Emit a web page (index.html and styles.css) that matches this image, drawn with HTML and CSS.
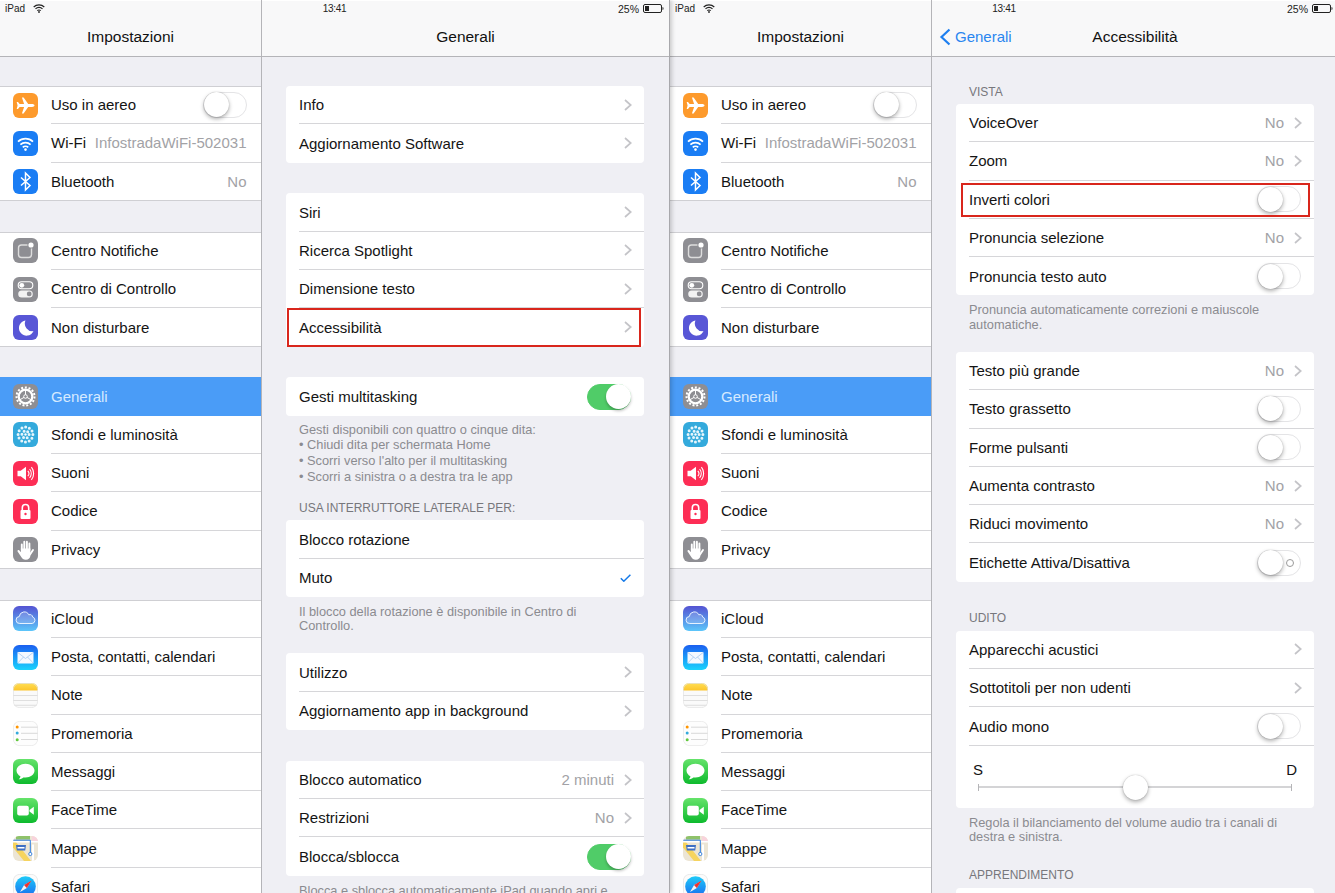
FILE: index.html
```html
<!DOCTYPE html>
<html lang="it">
<head>
    <meta charset="UTF-8">
    <meta name="viewport" content="width=device-width, initial-scale=1.0">
    <title>Impostazioni - Accessibilità</title>
    <link rel="stylesheet" href="styles.css">
</head>
<body>
    <!-- icone condivise -->
    <svg class="sprite" xmlns="http://www.w3.org/2000/svg">
        <defs>
            <linearGradient id="g-cloud" x1="0" y1="0" x2="0" y2="1"><stop offset="0" stop-color="#5453d2"/><stop offset="1" stop-color="#5cc6fa"/></linearGradient>
            <linearGradient id="g-mail" x1="0" y1="0" x2="0" y2="1"><stop offset="0" stop-color="#1b5ff0"/><stop offset="1" stop-color="#1ad3fd"/></linearGradient>
            <linearGradient id="g-green" x1="0" y1="0" x2="0" y2="1"><stop offset="0" stop-color="#66e36b"/><stop offset="1" stop-color="#0dba2d"/></linearGradient>
            <linearGradient id="g-note" x1="0" y1="0" x2="0" y2="1"><stop offset="0" stop-color="#ffdf55"/><stop offset="1" stop-color="#fdc52b"/></linearGradient>
            <linearGradient id="g-safari" x1="0" y1="0" x2="0" y2="1"><stop offset="0" stop-color="#1ecbf8"/><stop offset="1" stop-color="#1a6df0"/></linearGradient>
        </defs>
        <symbol id="i-plane" viewBox="0 0 25 25">
            <rect width="25" height="25" fill="#fd9a2c"/>
            <path fill="#fff" d="M21.5 12.5c0-.8-1.2-1.4-2.4-1.4h-3.9L10.6 4.6H8.9l2.2 6.5H6.6L5 9H3.7l.9 3.5-.9 3.5H5l1.6-2.1h4.5l-2.2 6.5h1.7l4.6-6.5h3.9c1.2 0 2.4-.6 2.4-1.4z"/>
        </symbol>
        <symbol id="i-wifi" viewBox="0 0 25 25">
            <rect width="25" height="25" fill="#1a7df4"/>
            <g fill="none" stroke="#fff" stroke-width="1.7">
                <path d="M5 10.6a11 11 0 0 1 15 0"/>
                <path d="M7.4 13.6a7.4 7.4 0 0 1 10.2 0"/>
                <path d="M9.8 16.4a3.8 3.8 0 0 1 5.4 0"/>
            </g>
            <circle cx="12.5" cy="18.6" r="1.3" fill="#fff"/>
        </symbol>
        <symbol id="i-bt" viewBox="0 0 25 25">
            <rect width="25" height="25" fill="#1a7df4"/>
            <path fill="none" stroke="#fff" stroke-width="1.5" d="M8 8.5l9 8-4.5 4.5V4l4.5 4.5-9 8"/>
        </symbol>
        <symbol id="i-notif" viewBox="0 0 25 25">
            <rect width="25" height="25" fill="#8e8e93"/>
            <rect x="5.5" y="7" width="13" height="12.5" rx="3" fill="none" stroke="#ddd" stroke-width="1.4"/>
            <circle cx="18" cy="7" r="3.6" fill="#8e8e93"/>
            <circle cx="18" cy="7" r="2.6" fill="#fff"/>
        </symbol>
        <symbol id="i-control" viewBox="0 0 25 25">
            <rect width="25" height="25" fill="#8e8e93"/>
            <rect x="5.2" y="4.8" width="14.6" height="7" rx="3.5" fill="none" stroke="#fff" stroke-width="1.1"/>
            <circle cx="8.8" cy="8.3" r="2.4" fill="#fff"/>
            <rect x="5.2" y="13.4" width="14.6" height="7" rx="3.5" fill="#f2f2f2"/>
            <circle cx="16.2" cy="16.9" r="2.4" fill="#8e8e93"/>
        </symbol>
        <symbol id="i-moon" viewBox="0 0 25 25">
            <rect width="25" height="25" fill="#5856d6"/>
            <path fill="#fff" d="M12.5 5.5a7.6 7.6 0 1 0 8 10.6 7.6 7.6 0 0 1-8-10.6z"/>
        </symbol>
        <symbol id="i-gear" viewBox="0 0 25 25">
            <rect width="25" height="25" fill="#8e8e93"/>
            <g fill="none" stroke="#fff">
                <circle cx="12.5" cy="12.5" r="9" stroke-width="2" stroke-dasharray="2 1.77"/>
                <circle cx="12.5" cy="12.5" r="6.8" stroke-width="2.2"/>
                <circle cx="12.5" cy="12.5" r="1.8" stroke-width="1"/>
                <path stroke-width="1" d="M12.5 10.7V6M14 13.4l4.2 2.4M11 13.4l-4.2 2.4"/>
            </g>
        </symbol>
        <symbol id="i-flower" viewBox="0 0 25 25">
            <rect width="25" height="25" fill="#34aadc"/>
            <g fill="none" stroke="#fff" stroke-linecap="round" stroke-width="3" opacity=".88">
                <circle cx="12.5" cy="12.5" r="7.4" stroke-dasharray="0 3.87"/>
                <circle cx="12.5" cy="12.5" r="3.6" stroke-dasharray="0 3.77"/>
            </g>
            <circle cx="12.5" cy="12.5" r="1.2" fill="#fff"/>
        </symbol>
        <symbol id="i-sound" viewBox="0 0 25 25">
            <rect width="25" height="25" fill="#fd2d55"/>
            <path fill="#fff" d="M4.5 9.8h3.2l5.3-4v13.4l-5.300-4H4.5z"/>
            <g fill="none" stroke="#fff" stroke-width="1.1">
                <path d="M14.8 9.8a4 4 0 0 1 0 5.4"/>
                <path d="M16.6 8a7 7 0 0 1 0 9"/>
                <path d="M18.4 6.2a10 10 0 0 1 0 12.6"/>
            </g>
        </symbol>
        <symbol id="i-lock" viewBox="0 0 25 25">
            <rect width="25" height="25" fill="#fd2d55"/>
            <path fill="none" stroke="#fff" stroke-width="1.6" d="M9.3 11.5V8.7a3.2 3.2 0 0 1 6.4 0v2.8"/>
            <rect x="7.5" y="11" width="10" height="9" rx="1" fill="#fff"/>
            <circle cx="12.5" cy="15" r="1.2" fill="#fd2d55"/>
        </symbol>
        <symbol id="i-hand" viewBox="0 0 25 25">
            <rect width="25" height="25" fill="#8e8e93"/>
            <g stroke="#fff" stroke-width="1.9" stroke-linecap="round">
                <path d="M8.8 13V7.5M11.3 12V4.800M13.900 12V4.800M16.400 13V6.500M17 17.500l3-4.500"/>
            </g>
            <path fill="#fff" d="M7.9 11.5h9.5v7c0 2.6-2 4.2-4.600 4.200-2.300 0-3.600-1-4.700-3l-3.500-5.300c-.7-1.100.8-2.100 1.600-1.100l1.700 2z"/>
        </symbol>
        <symbol id="i-cloud" viewBox="0 0 25 25">
            <rect width="25" height="25" fill="url(#g-cloud)"/>
            <path fill="#fff" fill-opacity=".18" stroke="#e6f2ff" stroke-width="1" d="M6.8 17.5a3.5 3.5 0 0 1-.5-7 5 5 0 0 1 9.5-1.7 3.1 3.1 0 0 1 3.9 2.3 3.3 3.3 0 0 1-.6 6.400z"/>
        </symbol>
        <symbol id="i-mail" viewBox="0 0 25 25">
            <rect width="25" height="25" fill="url(#g-mail)"/>
            <rect x="4.5" y="7" width="16" height="11.5" rx=".8" fill="#f4f9ff"/>
            <path fill="none" stroke="#a5c8ef" stroke-width=".8" d="M4.8 7.5l7.700 6 7.700-6M4.800 18l5.700-6M20.200 18l-5.700-6"/>
        </symbol>
        <symbol id="i-note" viewBox="0 0 25 25">
            <rect width="25" height="25" fill="#fafafa"/>
            <rect width="25" height="7.5" fill="url(#g-note)"/>
            <path stroke="#d8d8d8" stroke-width=".8" d="M0 12.5h25M0 17.5h25M0 22.3h25"/>
            <rect x=".4" y=".4" width="24.2" height="24.2" rx="6" fill="none" stroke="#e3e3e3" stroke-width=".8"/>
        </symbol>
        <symbol id="i-list" viewBox="0 0 25 25">
            <rect width="25" height="25" fill="#fdfdfd"/>
            <path stroke="#cfcfcf" stroke-width=".8" d="M8 6.2h17M8 12.3h17M8 18.5h17"/>
            <circle cx="4.2" cy="6" r="1.5" fill="#ff9500"/>
            <circle cx="4.2" cy="12" r="1.5" fill="#34aadc"/>
            <circle cx="4.2" cy="18.8" r="1.5" fill="#64c93f"/>
            <rect x=".4" y=".4" width="24.2" height="24.2" rx="6" fill="none" stroke="#e6e6e6" stroke-width=".8"/>
        </symbol>
        <symbol id="i-msg" viewBox="0 0 25 25">
            <rect width="25" height="25" fill="url(#g-green)"/>
            <path fill="#fff" d="M12.5 4.7c-5 0-9 3-9 6.9 0 2.5 1.600 4.500 4 5.800-.2 1-.9 2-1.900 2.800 1.900 0 3.600-.7 4.700-1.800.7.100 1.400.2 2.200.2 5 0 9-3.100 9-7s-4-6.900-9-6.900z"/>
        </symbol>
        <symbol id="i-face" viewBox="0 0 25 25">
            <rect width="25" height="25" fill="url(#g-green)"/>
            <rect x="4.2" y="7.8" width="11.6" height="9.8" rx="2" fill="#fff"/>
            <path fill="#fff" d="M16.5 12l4.300-3.300v8l-4.300-3.200z"/>
        </symbol>
        <symbol id="i-map" viewBox="0 0 25 25">
            <rect width="25" height="25" fill="#ece5d4"/>
            <path fill="#8fc26a" d="M3 0h14v3.500H3z"/>
            <path fill="#f8d3dc" d="M19 0h6v6h-6z"/>
            <path fill="#f6d45f" d="M0 11.500L11 25h7L3 6H0z"/>
            <path fill="#fff" d="M19 8.500h2V25h-2zM0 5h25v1.500H0z"/>
            <path fill="none" stroke="#2e7de0" stroke-width="1" d="M0 4.200h17.300V17"/>
            <circle cx="17.3" cy="18" r="1.6" fill="#fff" stroke="#2e7de0" stroke-width=".9"/>
            <path fill="#3e6fc4" d="M3 9h10l-.8 5.500H3.800z"/>
            <path fill="#fff" d="M4.500 11h7v1.500h-7z"/>
        </symbol>
        <symbol id="i-safari" viewBox="0 0 25 25">
            <rect width="25" height="25" fill="#fbfbfb"/>
            <rect x=".4" y=".4" width="24.2" height="24.2" rx="6" fill="none" stroke="#e3e3e3" stroke-width=".8"/>
            <circle cx="12.5" cy="12.5" r="10.3" fill="url(#g-safari)"/>
            <path fill="#fff" d="M17.500 7.500l-6.400 3.600 2.800 2.800z"/>
            <path fill="#f4f4f4" d="M7 18l4.100-6.900 2.800 2.800z"/>
            <path fill="#f0342e" d="M18.500 6.500l-4.600 7.400-2.800-2.800z"/>
        </symbol>
        <symbol id="chev" viewBox="0 0 8 12">
            <path fill="none" stroke="#c4c4c8" stroke-width="1.7" d="M1 1l5.700 5L1 11"/>
        </symbol>
    </svg>

    <main class="ipad">
        <!-- schermata 1 -->
        <section class="screen screen-one">
            <div class="status">
                <div class="status-left">iPad
                    <svg class="status-wifi" viewBox="0 0 12 9"><path fill="none" stroke="#222" stroke-width="1.2" d="M.7 3a7.600 7.600 0 0 1 10.600 0M2.500 4.900a5 5 0 0 1 7 0M4.300 6.700a2.400 2.400 0 0 1 3.400 0"/><circle cx="6" cy="8" r=".9" fill="#222"/></svg>
                </div>
                <div class="status-time">13:41</div>
                <div class="status-right">25%
                    <svg class="status-batt" viewBox="0 0 21 9"><rect x=".5" y=".5" width="18" height="8" rx="1.5" fill="none" stroke="#222"/><rect x="2" y="2" width="4" height="5" fill="#222"/><path d="M19.500 3c.8.300 1 .8 1 1.500s-.2 1.200-1 1.500z" fill="#222"/></svg>
                </div>
            </div>

            <aside class="sidebar">
                <div class="nav"><span class="nav-title">Impostazioni</span></div>
                <div class="side-list">
                    <div class="group">
                        <div class="row"><svg class="icon"><use href="#i-plane"/></svg><div class="row-body"><span>Uso in aereo</span><span class="toggle"><span class="knob"></span></span></div></div>
                        <div class="row"><svg class="icon"><use href="#i-wifi"/></svg><div class="row-body"><span>Wi-Fi</span><span class="value">InfostradaWiFi-502031</span></div></div>
                        <div class="row"><svg class="icon"><use href="#i-bt"/></svg><div class="row-body"><span>Bluetooth</span><span class="value">No</span></div></div>
                    </div>
                    <div class="group">
                        <div class="row"><svg class="icon"><use href="#i-notif"/></svg><div class="row-body"><span>Centro Notifiche</span></div></div>
                        <div class="row"><svg class="icon"><use href="#i-control"/></svg><div class="row-body"><span>Centro di Controllo</span></div></div>
                        <div class="row"><svg class="icon"><use href="#i-moon"/></svg><div class="row-body"><span>Non disturbare</span></div></div>
                    </div>
                    <div class="group">
                        <div class="row row-selected"><svg class="icon"><use href="#i-gear"/></svg><div class="row-body"><span>Generali</span></div></div>
                        <div class="row"><svg class="icon"><use href="#i-flower"/></svg><div class="row-body"><span>Sfondi e luminosità</span></div></div>
                        <div class="row"><svg class="icon"><use href="#i-sound"/></svg><div class="row-body"><span>Suoni</span></div></div>
                        <div class="row"><svg class="icon"><use href="#i-lock"/></svg><div class="row-body"><span>Codice</span></div></div>
                        <div class="row"><svg class="icon"><use href="#i-hand"/></svg><div class="row-body"><span>Privacy</span></div></div>
                    </div>
                    <div class="group">
                        <div class="row"><svg class="icon"><use href="#i-cloud"/></svg><div class="row-body"><span>iCloud</span></div></div>
                        <div class="row"><svg class="icon"><use href="#i-mail"/></svg><div class="row-body"><span>Posta, contatti, calendari</span></div></div>
                        <div class="row"><svg class="icon"><use href="#i-note"/></svg><div class="row-body"><span>Note</span></div></div>
                        <div class="row"><svg class="icon"><use href="#i-list"/></svg><div class="row-body"><span>Promemoria</span></div></div>
                        <div class="row"><svg class="icon"><use href="#i-msg"/></svg><div class="row-body"><span>Messaggi</span></div></div>
                        <div class="row"><svg class="icon"><use href="#i-face"/></svg><div class="row-body"><span>FaceTime</span></div></div>
                        <div class="row"><svg class="icon"><use href="#i-map"/></svg><div class="row-body"><span>Mappe</span></div></div>
                        <div class="row"><svg class="icon"><use href="#i-safari"/></svg><div class="row-body"><span>Safari</span></div></div>
                    </div>
                </div>
            </aside>

            <div class="detail">
                <div class="nav"><span class="nav-title">Generali</span></div>
                <div class="detail-list detail-general">
                    <div class="card">
                        <div class="row"><div class="row-body"><span>Info</span><svg class="chev"><use href="#chev"/></svg></div></div>
                        <div class="row"><div class="row-body"><span>Aggiornamento Software</span><svg class="chev"><use href="#chev"/></svg></div></div>
                    </div>
                    <div class="card">
                        <div class="row"><div class="row-body"><span>Siri</span><svg class="chev"><use href="#chev"/></svg></div></div>
                        <div class="row"><div class="row-body"><span>Ricerca Spotlight</span><svg class="chev"><use href="#chev"/></svg></div></div>
                        <div class="row"><div class="row-body"><span>Dimensione testo</span><svg class="chev"><use href="#chev"/></svg></div></div>
                        <div class="row mark-general"><div class="row-body"><span>Accessibilità</span><svg class="chev"><use href="#chev"/></svg></div></div>
                    </div>
                    <div class="card">
                        <div class="row"><div class="row-body"><span>Gesti multitasking</span><span class="toggle toggle-on"><span class="knob"></span></span></div></div>
                    </div>
                    <p class="footnote footnote-loose">Gesti disponibili con quattro o cinque dita:<br>• Chiudi dita per schermata Home<br>• Scorri verso l'alto per il multitasking<br>• Scorri a sinistra o a destra tra le app</p>
                    <h3 class="section-head">USA INTERRUTTORE LATERALE PER:</h3>
                    <div class="card">
                        <div class="row"><div class="row-body"><span>Blocco rotazione</span></div></div>
                        <div class="row"><div class="row-body"><span>Muto</span><svg class="check" viewBox="0 0 11 8"><path fill="none" stroke="#1479e8" stroke-width="1.5" d="M.8 4.200l3 3L10.400.8"/></svg></div></div>
                    </div>
                    <p class="footnote">Il blocco della rotazione è disponibile in Centro di<br>Controllo.</p>
                    <div class="card">
                        <div class="row"><div class="row-body"><span>Utilizzo</span><svg class="chev"><use href="#chev"/></svg></div></div>
                        <div class="row"><div class="row-body"><span>Aggiornamento app in background</span><svg class="chev"><use href="#chev"/></svg></div></div>
                    </div>
                    <div class="card">
                        <div class="row"><div class="row-body"><span>Blocco automatico</span><span class="right"><span class="value">2 minuti</span><svg class="chev"><use href="#chev"/></svg></span></div></div>
                        <div class="row"><div class="row-body"><span>Restrizioni</span><span class="right"><span class="value">No</span><svg class="chev"><use href="#chev"/></svg></span></div></div>
                        <div class="row"><div class="row-body"><span>Blocca/sblocca</span><span class="toggle toggle-on"><span class="knob"></span></span></div></div>
                    </div>
                    <p class="footnote">Blocca e sblocca automaticamente iPad quando apri e</p>
                </div>
            </div>
        </section>

        <!-- schermata 2 -->
        <section class="screen screen-two">
            <div class="status">
                <div class="status-left">iPad
                    <svg class="status-wifi" viewBox="0 0 12 9"><path fill="none" stroke="#222" stroke-width="1.2" d="M.7 3a7.600 7.600 0 0 1 10.600 0M2.500 4.900a5 5 0 0 1 7 0M4.300 6.700a2.400 2.400 0 0 1 3.400 0"/><circle cx="6" cy="8" r=".9" fill="#222"/></svg>
                </div>
                <div class="status-time">13:41</div>
                <div class="status-right">25%
                    <svg class="status-batt" viewBox="0 0 21 9"><rect x=".5" y=".5" width="18" height="8" rx="1.5" fill="none" stroke="#222"/><rect x="2" y="2" width="4" height="5" fill="#222"/><path d="M19.500 3c.8.300 1 .8 1 1.500s-.2 1.200-1 1.500z" fill="#222"/></svg>
                </div>
            </div>

            <aside class="sidebar">
                <div class="nav"><span class="nav-title">Impostazioni</span></div>
                <div class="side-list">
                    <div class="group">
                        <div class="row"><svg class="icon"><use href="#i-plane"/></svg><div class="row-body"><span>Uso in aereo</span><span class="toggle"><span class="knob"></span></span></div></div>
                        <div class="row"><svg class="icon"><use href="#i-wifi"/></svg><div class="row-body"><span>Wi-Fi</span><span class="value">InfostradaWiFi-502031</span></div></div>
                        <div class="row"><svg class="icon"><use href="#i-bt"/></svg><div class="row-body"><span>Bluetooth</span><span class="value">No</span></div></div>
                    </div>
                    <div class="group">
                        <div class="row"><svg class="icon"><use href="#i-notif"/></svg><div class="row-body"><span>Centro Notifiche</span></div></div>
                        <div class="row"><svg class="icon"><use href="#i-control"/></svg><div class="row-body"><span>Centro di Controllo</span></div></div>
                        <div class="row"><svg class="icon"><use href="#i-moon"/></svg><div class="row-body"><span>Non disturbare</span></div></div>
                    </div>
                    <div class="group">
                        <div class="row row-selected"><svg class="icon"><use href="#i-gear"/></svg><div class="row-body"><span>Generali</span></div></div>
                        <div class="row"><svg class="icon"><use href="#i-flower"/></svg><div class="row-body"><span>Sfondi e luminosità</span></div></div>
                        <div class="row"><svg class="icon"><use href="#i-sound"/></svg><div class="row-body"><span>Suoni</span></div></div>
                        <div class="row"><svg class="icon"><use href="#i-lock"/></svg><div class="row-body"><span>Codice</span></div></div>
                        <div class="row"><svg class="icon"><use href="#i-hand"/></svg><div class="row-body"><span>Privacy</span></div></div>
                    </div>
                    <div class="group">
                        <div class="row"><svg class="icon"><use href="#i-cloud"/></svg><div class="row-body"><span>iCloud</span></div></div>
                        <div class="row"><svg class="icon"><use href="#i-mail"/></svg><div class="row-body"><span>Posta, contatti, calendari</span></div></div>
                        <div class="row"><svg class="icon"><use href="#i-note"/></svg><div class="row-body"><span>Note</span></div></div>
                        <div class="row"><svg class="icon"><use href="#i-list"/></svg><div class="row-body"><span>Promemoria</span></div></div>
                        <div class="row"><svg class="icon"><use href="#i-msg"/></svg><div class="row-body"><span>Messaggi</span></div></div>
                        <div class="row"><svg class="icon"><use href="#i-face"/></svg><div class="row-body"><span>FaceTime</span></div></div>
                        <div class="row"><svg class="icon"><use href="#i-map"/></svg><div class="row-body"><span>Mappe</span></div></div>
                        <div class="row"><svg class="icon"><use href="#i-safari"/></svg><div class="row-body"><span>Safari</span></div></div>
                    </div>
                </div>
            </aside>

            <div class="detail">
                <div class="nav nav-back">
                    <a class="back" href="#"><svg class="back-chev" viewBox="0 0 12 18"><path fill="none" stroke="#1e7ff0" stroke-width="2.2" d="M10.500 1.500L2.500 9l8 7.500"/></svg>Generali</a>
                    <span class="nav-title">Accessibilità</span>
                </div>
                <div class="detail-list detail-access">
                    <h3 class="section-head section-first">VISTA</h3>
                    <div class="card">
                        <div class="row"><div class="row-body"><span>VoiceOver</span><span class="right"><span class="value">No</span><svg class="chev"><use href="#chev"/></svg></span></div></div>
                        <div class="row"><div class="row-body"><span>Zoom</span><span class="right"><span class="value">No</span><svg class="chev"><use href="#chev"/></svg></span></div></div>
                        <div class="row mark-access"><div class="row-body"><span>Inverti colori</span><span class="toggle"><span class="knob"></span></span></div></div>
                        <div class="row"><div class="row-body"><span>Pronuncia selezione</span><span class="right"><span class="value">No</span><svg class="chev"><use href="#chev"/></svg></span></div></div>
                        <div class="row"><div class="row-body"><span>Pronuncia testo auto</span><span class="toggle"><span class="knob"></span></span></div></div>
                    </div>
                    <p class="footnote">Pronuncia automaticamente correzioni e maiuscole<br>automatiche.</p>
                    <div class="card">
                        <div class="row"><div class="row-body"><span>Testo più grande</span><span class="right"><span class="value">No</span><svg class="chev"><use href="#chev"/></svg></span></div></div>
                        <div class="row"><div class="row-body"><span>Testo grassetto</span><span class="toggle"><span class="knob"></span></span></div></div>
                        <div class="row"><div class="row-body"><span>Forme pulsanti</span><span class="toggle"><span class="knob"></span></span></div></div>
                        <div class="row"><div class="row-body"><span>Aumenta contrasto</span><span class="right"><span class="value">No</span><svg class="chev"><use href="#chev"/></svg></span></div></div>
                        <div class="row"><div class="row-body"><span>Riduci movimento</span><span class="right"><span class="value">No</span><svg class="chev"><use href="#chev"/></svg></span></div></div>
                        <div class="row"><div class="row-body"><span>Etichette Attiva/Disattiva</span><span class="toggle toggle-labeled"><span class="knob"></span><span class="toggle-o"></span></span></div></div>
                    </div>
                    <h3 class="section-head">UDITO</h3>
                    <div class="card">
                        <div class="row"><div class="row-body"><span>Apparecchi acustici</span><svg class="chev"><use href="#chev"/></svg></div></div>
                        <div class="row"><div class="row-body"><span>Sottotitoli per non udenti</span><svg class="chev"><use href="#chev"/></svg></div></div>
                        <div class="row"><div class="row-body"><span>Audio mono</span><span class="toggle"><span class="knob"></span></span></div></div>
                        <div class="slider-row">
                            <div class="slider-labels"><span>S</span><span>D</span></div>
                            <div class="slider"><span class="tick"></span><span class="knob"></span><span class="tick"></span></div>
                        </div>
                    </div>
                    <p class="footnote">Regola il bilanciamento del volume audio tra i canali di<br>destra e sinistra.</p>
                    <h3 class="section-head">APPRENDIMENTO</h3>
                    <div class="card card-cut"></div>
                </div>
            </div>
        </section>
    </main>
</body>
</html>
```

FILE: styles.css
```css
* {
    margin: 0;
    padding: 0;
    box-sizing: border-box;
}

html, body {
    height: 100%;
    overflow: hidden;
}

body {
    font-family: "Liberation Sans", Arial, sans-serif;
    font-size: 15px;
    color: #141414;
    background: #efeff4;
}

.sprite {
    display: block;
    width: 0;
    height: 0;
}

.ipad {
    display: flex;
    height: 893px;
}

.screen {
    position: relative;
    display: flex;
    height: 893px;
    overflow: hidden;
}

.screen-one {
    width: 670px;
    z-index: 1;
    box-shadow: 2px 0 4px rgba(0, 0, 0, 0.18);
    overflow: visible;
}

.screen-two {
    width: 665px;
}

/* barra di stato */
.status {
    position: absolute;
    top: 0;
    left: 0;
    right: 0;
    height: 16px;
    display: grid;
    grid-template-columns: 1fr auto 1fr;
    align-items: center;
    padding: 1px 6px 0 5px;
    font-size: 10.5px;
    color: #222;
    z-index: 2;
}

.screen-two .status {
    padding-right: 2px;
}

.status-left {
    display: flex;
    align-items: center;
    gap: 8px;
    font-size: 10px;
}

.status-time {
    font-size: 10px;
    letter-spacing: -0.3px;
}

.status-wifi {
    width: 12px;
    height: 9px;
}

.status-right {
    display: flex;
    align-items: center;
    justify-content: flex-end;
    gap: 4px;
}

.status-batt {
    width: 21px;
    height: 9px;
}

/* colonne */
.sidebar {
    width: 262px;
    flex: none;
    border-right: 1px solid #b4b4b8;
}

.detail {
    flex: 1;
    min-width: 0;
}

.screen-one .detail {
    border-right: 1px solid #a8a8ac;
}

.nav {
    height: 57px;
    padding-top: 16px;
    background: #f8f8f9;
    border-top: 1px solid #fff;
    border-bottom: 1px solid #b4b4b8;
    display: flex;
    align-items: center;
    justify-content: center;
}

.nav-title {
    font-size: 15.5px;
    color: #111;
}

.nav-back {
    display: grid;
    grid-template-columns: 1fr auto 1fr;
    padding-left: 7px;
    padding-right: 4px;
}

.nav-back::after {
    content: '';
}

.back {
    display: flex;
    align-items: center;
    gap: 4px;
    color: #2a86f0;
    font-size: 15px;
    text-decoration: none;
}

.back-chev {
    width: 12px;
    height: 18px;
}

.side-list {
    padding-top: 29px;
}

.group {
    background: #fff;
    box-shadow: inset 0 1px #cfcfd3, inset 0 -1px #cfcfd3;
}

.group + .group {
    margin-top: 30.8px;
}

.row {
    height: 38.3px;
    display: flex;
    align-items: center;
    padding-left: 13px;
    position: relative;
}

.group .row {
    padding-left: 12.5px;
    gap: 13.5px;
}

.row-body {
    flex: 1;
    min-width: 0;
    height: 100%;
    display: flex;
    align-items: center;
    justify-content: space-between;
    padding-right: 12px;
    border-bottom: 1px solid #d6d6d9;
    white-space: nowrap;
}

.row:last-child .row-body {
    border-bottom: none;
}

.group .row-body {
    padding-right: 14.5px;
}

.icon {
    width: 25px;
    height: 25px;
    flex: none;
    border-radius: 6px;
    overflow: hidden;
}

.row-selected {
    background: #4a9cf7;
    color: #d6eaff;
}

.row-selected .row-body {
    border-bottom: none;
}

.value {
    color: #a2a2a6;
}

.right {
    display: flex;
    align-items: center;
    gap: 10px;
}

.chev {
    width: 8px;
    height: 12px;
    flex: none;
}

.check {
    width: 11px;
    height: 8px;
    margin-right: 1px;
}

/* interruttori */
.toggle {
    width: 44px;
    height: 26px;
    flex: none;
    display: flex;
    align-items: center;
    border-radius: 13px;
    border: 1px solid #e4e4e6;
    background: #fff;
}

.detail .toggle {
    margin-right: 1px;
}

.toggle-on {
    justify-content: flex-end;
    background: #50cc68;
    border-color: #50cc68;
}

.toggle-labeled {
    justify-content: space-between;
    padding-right: 6px;
}

.toggle-o {
    width: 8px;
    height: 8px;
    border: 1px solid #9a9a9a;
    border-radius: 50%;
}

.knob {
    width: 25px;
    height: 25px;
    flex: none;
    border-radius: 50%;
    background: #fff;
    box-shadow: 0 2px 4px rgba(0, 0, 0, 0.32), 0 0 1px rgba(0, 0, 0, 0.3);
}

.toggle-on .knob {
    margin-right: -1px;
    box-shadow: 0 2px 3px rgba(0, 0, 0, 0.25);
}

/* pannello dettagli */
.detail-list {
    padding-left: 24px;
}

.detail-general {
    padding-top: 29px;
    padding-right: 25px;
}

.detail-access {
    padding-top: 28px;
    padding-right: 21px;
}

.card {
    background: #fff;
    border-radius: 4px;
}

.card + .card {
    margin-top: 30.8px;
}

.card-cut {
    height: 20px;
}

.section-head {
    font-size: 12px;
    font-weight: normal;
    line-height: 14px;
    color: #77777c;
    margin: 29px 13px 6px;
}

.section-first {
    margin: 0 13px 5px;
}

.footnote {
    font-size: 12.8px;
    line-height: 14.5px;
    color: #8b8b90;
    margin: 8px 13px 0;
    white-space: nowrap;
}

.footnote-loose {
    line-height: 15.7px;
    margin-top: 6px;
}

.footnote + .card {
    margin-top: 19.5px;
}

.footnote + .section-head {
    margin-top: 23.5px;
}

.footnote-loose + .section-head {
    margin: 16.5px 13px 5.4px;
}

/* bilanciamento audio */
.slider-row {
    height: 62px;
    padding: 15px 17px 0;
}

.slider-labels {
    display: flex;
    justify-content: space-between;
    line-height: 17px;
}

.slider {
    height: 25px;
    margin: -3px 5px 0 5px;
    display: flex;
    align-items: center;
    justify-content: space-between;
    background: linear-gradient(#d4d4d6, #d4d4d6) center / 100% 2px no-repeat;
}

.tick {
    width: 1px;
    height: 7px;
    background: #b5b5b8;
}

/* riquadri rossi */
.mark-general::after,
.mark-access::after {
    content: '';
    position: absolute;
    border: 2px solid #d9261c;
}

.mark-general::after {
    top: 0;
    left: 1px;
    right: 3px;
    bottom: 0;
}

.mark-access::after {
    top: 2px;
    left: 5px;
    right: 4px;
    bottom: 2px;
}
```
